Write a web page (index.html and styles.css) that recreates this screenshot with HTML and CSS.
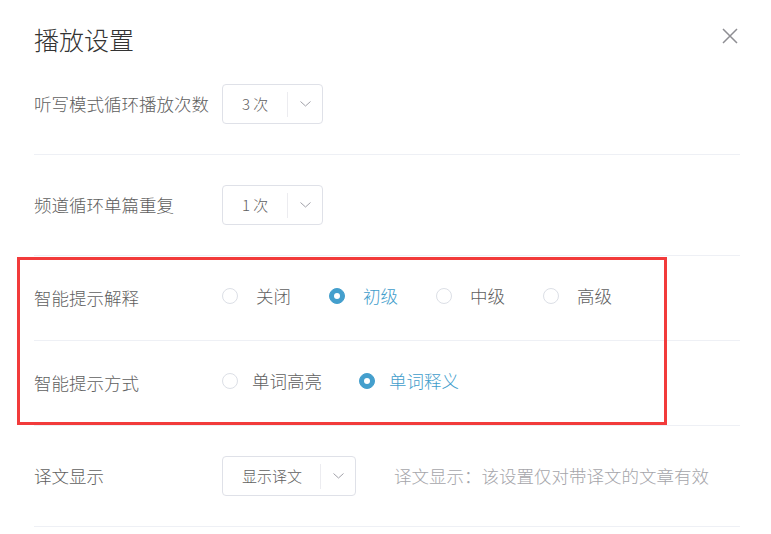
FILE: index.html
```html
<!DOCTYPE html>
<html lang="zh-CN">
<head>
<meta charset="utf-8">
<title>播放设置</title>
<link rel="stylesheet" href="styles.css">
</head>
<body>
<div class="dialog">
  <div class="header">
    <h1 class="title">播放设置</h1>
    <button class="close" aria-label="关闭">
      <svg width="16" height="16" viewBox="0 0 16 16"><path d="M1 1L15 15M15 1L1 15" stroke="#8e8e93" stroke-width="1.5" fill="none"/></svg>
    </button>
  </div>

  <div class="row row-tall">
    <div class="label">听写模式循环播放次数</div>
    <div class="select select-sm">
      <span class="select-value">3 次</span>
      <span class="select-divider"></span>
      <span class="select-arrow"><svg width="11" height="6" viewBox="0 0 11 6"><path d="M0.5 0.5L5.5 5L10.5 0.5" stroke="#a0a0a8" stroke-width="1" fill="none"/></svg></span>
    </div>
  </div>

  <div class="row row-tall">
    <div class="label">频道循环单篇重复</div>
    <div class="select select-sm">
      <span class="select-value">1 次</span>
      <span class="select-divider"></span>
      <span class="select-arrow"><svg width="11" height="6" viewBox="0 0 11 6"><path d="M0.5 0.5L5.5 5L10.5 0.5" stroke="#a0a0a8" stroke-width="1" fill="none"/></svg></span>
    </div>
  </div>

  <div class="highlight-group">
    <div class="row row-short">
      <div class="label">智能提示解释</div>
      <div class="options options-wide">
        <label class="option"><span class="radio"></span><span class="option-text">关闭</span></label>
        <label class="option is-checked"><span class="radio"></span><span class="option-text">初级</span></label>
        <label class="option"><span class="radio"></span><span class="option-text">中级</span></label>
        <label class="option"><span class="radio"></span><span class="option-text">高级</span></label>
      </div>
    </div>
    <div class="row row-short">
      <div class="label">智能提示方式</div>
      <div class="options">
        <label class="option"><span class="radio"></span><span class="option-text">单词高亮</span></label>
        <label class="option is-checked"><span class="radio"></span><span class="option-text">单词释义</span></label>
      </div>
    </div>
    <div class="annotation"></div>
  </div>

  <div class="row row-tall">
    <div class="label">译文显示</div>
    <div class="select select-lg">
      <span class="select-value">显示译文</span>
      <span class="select-divider"></span>
      <span class="select-arrow"><svg width="11" height="6" viewBox="0 0 11 6"><path d="M0.5 0.5L5.5 5L10.5 0.5" stroke="#a0a0a8" stroke-width="1" fill="none"/></svg></span>
    </div>
    <div class="hint">译文显示：该设置仅对带译文的文章有效</div>
  </div>
</div>
</body>
</html>
```

FILE: styles.css
```css
* { box-sizing: border-box; }

html, body {
  margin: 0;
  padding: 0;
  background: #ffffff;
}

body {
  font-family: "Noto Sans CJK SC", "Noto Sans", "Liberation Sans", sans-serif;
  font-weight: 300;
  color: #666;
}

.dialog {
  width: 771px;
  padding: 0 31px 0 34px;
}

.header {
  display: flex;
  justify-content: space-between;
  align-items: flex-start;
  height: 54px;
  padding-top: 24px;
}

.title {
  margin: 0;
  font-size: 25px;
  line-height: 30px;
  font-weight: 300;
  color: #333;
}

.close {
  margin: 4px 2px 0 0;
  padding: 0;
  border: 0;
  background: none;
  width: 16px;
  height: 16px;
  display: flex;
}

.row {
  display: flex;
  align-items: center;
  border-bottom: 1px solid #eef0f5;
}

.row-tall { height: 101px; }
.row-short { height: 85px; }

.label {
  width: 188px;
  flex: none;
  font-size: 17.5px;
  line-height: 24px;
  color: #606060;
  white-space: nowrap;
}

.select {
  display: flex;
  align-items: center;
  height: 40px;
  border: 1px solid #dfe1e8;
  border-radius: 4px;
  flex: none;
}

.select-sm { width: 101px; }
.select-lg { width: 134px; }

.select-value {
  flex: 1;
  padding-left: 19px;
  font-size: 15px;
  line-height: 20px;
  color: #606060;
  white-space: nowrap;
}

.select-divider {
  width: 1px;
  height: 25px;
  background: #ececf0;
}

.select-arrow {
  width: 34px;
  display: flex;
  justify-content: center;
  align-items: center;
}

.select-arrow svg { display: block; }

.hint {
  margin-left: 38px;
  font-size: 17.5px;
  line-height: 24px;
  color: #a5a5aa;
  white-space: nowrap;
}

.options {
  display: flex;
  align-items: center;
  margin-bottom: 5px;
}

.option {
  display: flex;
  align-items: center;
  margin-right: 37px;
  font-size: 17.5px;
  line-height: 24px;
  color: #606060;
}

.option .radio {
  width: 16px;
  height: 16px;
  border-radius: 50%;
  border: 1px solid #dcdfe6;
  background: #fff;
  display: flex;
  align-items: center;
  justify-content: center;
  flex: none;
}

.option-text {
  margin-left: 14px;
  white-space: nowrap;
}

.options-wide .option { margin-right: 38px; }
.options-wide .option-text { margin-left: 18px; }

.option.is-checked { color: #3f9dcb; }

.option.is-checked .radio {
  background: #449fcd;
  border-color: #449fcd;
}

.option.is-checked .radio::after {
  content: "";
  width: 6px;
  height: 6px;
  border-radius: 50%;
  background: #fff;
}

.highlight-group {
  position: relative;
}

.annotation {
  position: absolute;
  left: -17px;
  top: 1px;
  width: 650px;
  height: 168px;
  border: 3px solid #f23b3b;
  pointer-events: none;
}
```
